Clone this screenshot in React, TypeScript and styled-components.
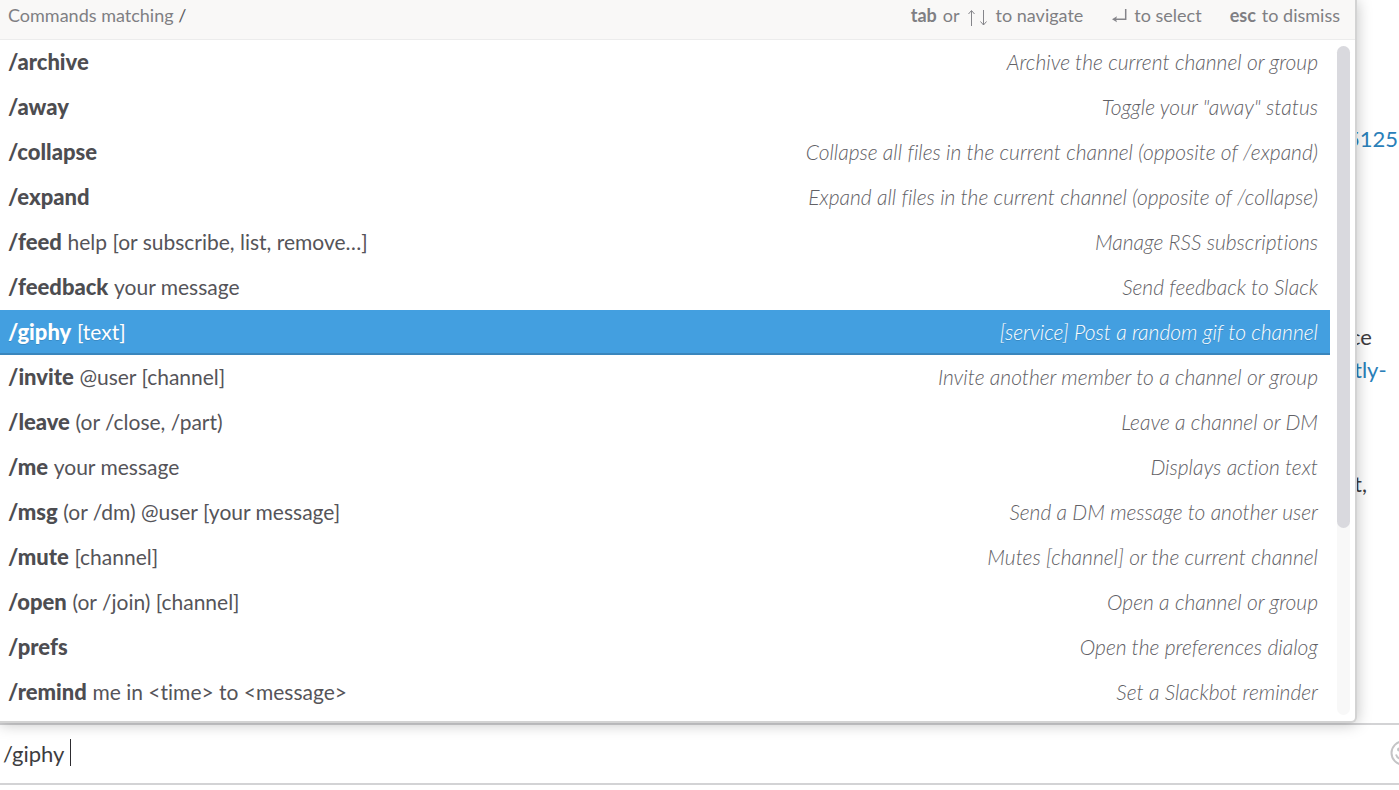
import React, { useState } from "react";
import styled, { createGlobalStyle } from "styled-components";

const GlobalStyle = createGlobalStyle`
  * { box-sizing: border-box; }
  body {
    margin: 0;
    background: #fff;
    color: #3d3c40;
    font-family: Lato, "Liberation Sans", sans-serif;
    font-size: 22px;
    font-variant-ligatures: none;
    overflow-x: hidden;
  }
`;

const Page = styled.div`
  display: flex;
  flex-direction: column;
  min-height: 100vh;
  overflow: hidden;
  padding-bottom: 5px;
`;

const Conversation = styled.main`
  position: relative;
  flex: 1;
  display: flex;
  justify-content: flex-end;
`;

const Messages = styled.div`
  display: flex;
  flex-direction: column;
  width: 54px;
  padding-top: 123px;
  line-height: 32px;
  white-space: nowrap;
`;

const Message = styled.p<{ $gap: number; $indent?: number }>`
  margin: 0 0 ${(p) => p.$gap}px;
  padding-left: ${(p) => p.$indent ?? 0}px;
`;

const MessageLink = styled.a`
  color: #2a80b9;
  text-decoration: none;
`;

const Popup = styled.section`
  position: absolute;
  left: 0;
  right: 42px;
  bottom: 0;
  background: #fff;
  border: solid #d3d3d3;
  border-width: 0 2px 2px 0;
  border-radius: 0 0 6px 0;
  box-shadow: 0 1px 15px rgba(0, 0, 0, 0.25);
`;

const PopupHeader = styled.header`
  display: flex;
  justify-content: space-between;
  height: 40px;
  padding: 3px 15px 0 8px;
  background: #f9f8f7;
  border-bottom: 1px solid #ececec;
  color: #7f7f83;
  font-size: 18px;
  line-height: 24px;
`;

const Title = styled.h2`
  margin: 0;
  font-size: 18px;
  font-weight: 400;

  b { color: #5c5c60; font-weight: 400; }
`;

const Hints = styled.div`
  display: flex;
  gap: 28px;
`;

const Hint = styled.span`
  display: flex;
  gap: 6px;
`;

const Key = styled.kbd`
  font-family: inherit;
  font-weight: 700;
`;

const KeyIcon = styled.svg`
  height: 24px;
  fill: none;
  stroke: #85858a;
`;

const PopupBody = styled.div`
  display: flex;
  padding-bottom: 6px;
`;

const CommandList = styled.ul`
  flex: 1;
  margin: 0;
  padding: 0;
  list-style: none;
`;

const Name = styled.strong`
  font-weight: 900;
  color: #4d4d51;
`;

const Usage = styled.span`
  font-size: 21px;
  color: #555459;
`;

const Description = styled.em`
  font-size: 21px;
  font-weight: 300;
  color: #626166;
`;

const Command = styled.li<{ $selected: boolean }>`
  display: flex;
  justify-content: space-between;
  height: 45px;
  padding: 0 12px 0 8px;
  line-height: 44px;
  white-space: nowrap;
  cursor: pointer;

  ${(p) =>
    p.$selected &&
    `
    background: #439fe0;
    border-bottom: 2px solid #3a86bd;
    text-shadow: 0 1px 0 rgba(0, 0, 0, 0.15);
    ${Name}, ${Usage}, ${Description} { color: #fff; }
  `}
`;

const ScrollTrack = styled.div`
  width: 13px;
  margin: 6px 5px 0 7px;
  border-radius: 7px;
  background: #f8f8f8;
`;

const ScrollThumb = styled.div`
  height: 72%;
  border-radius: 7px;
  background: #d9d9de;
`;

const Composer = styled.form`
  display: flex;
  align-items: center;
  height: 62px;
  padding-left: 3px;
  border: solid #d3d3d5;
  border-width: 2px 0;
`;

const MessageInput = styled.input`
  field-sizing: content;
  height: 32px;
  border: 0;
  padding: 0 0 2px;
  outline: none;
  background: none;
  color: #3d3c40;
  font: inherit;
`;

const Caret = styled.span`
  width: 1px;
  height: 27px;
  margin-bottom: 3px;
  background: #2d2c30;
`;

const EmojiButton = styled.button`
  margin: 0 -17px 0 auto;
  padding: 0 0 2px;
  border: 0;
  background: none;
  line-height: 0;
  cursor: pointer;
`;

const commands = [
  { name: "/archive", usage: "", description: "Archive the current channel or group" },
  { name: "/away", usage: "", description: 'Toggle your "away" status' },
  { name: "/collapse", usage: "", description: "Collapse all files in the current channel (opposite of /expand)" },
  { name: "/expand", usage: "", description: "Expand all files in the current channel (opposite of /collapse)" },
  { name: "/feed", usage: "help [or subscribe, list, remove…]", description: "Manage RSS subscriptions" },
  { name: "/feedback", usage: "your message", description: "Send feedback to Slack" },
  { name: "/giphy", usage: "[text]", description: "[service] Post a random gif to channel" },
  { name: "/invite", usage: "@user [channel]", description: "Invite another member to a channel or group" },
  { name: "/leave", usage: "(or /close, /part)", description: "Leave a channel or DM" },
  { name: "/me", usage: "your message", description: "Displays action text" },
  { name: "/msg", usage: "(or /dm) @user [your message]", description: "Send a DM message to another user" },
  { name: "/mute", usage: "[channel]", description: "Mutes [channel] or the current channel" },
  { name: "/open", usage: "(or /join) [channel]", description: "Open a channel or group" },
  { name: "/prefs", usage: "", description: "Open the preferences dialog" },
  { name: "/remind", usage: "me in <time> to <message>", description: "Set a Slackbot reminder" },
];

export default function App() {
  const [text, setText] = useState("/giphy ");
  const [selected, setSelected] = useState("/giphy");

  const choose = (name: string) => {
    setSelected(name);
    setText(name + " ");
  };

  return (
    <Page>
      <GlobalStyle />
      <Conversation>
        <Messages>
          <Message $gap={166} $indent={2}><MessageLink href="#">5125-</MessageLink></Message>
          <Message $gap={1} $indent={5}>ce</Message>
          <Message $gap={82} $indent={9}><MessageLink href="#">tly-</MessageLink></Message>
          <Message $gap={0} $indent={9}>t,</Message>
        </Messages>
        <Popup>
          <PopupHeader>
            <Title>Commands matching <b>/</b></Title>
            <Hints>
              <Hint>
                <Key>tab</Key> or
                <KeyIcon width="24" viewBox="0 0 24 24" aria-hidden="true">
                  <path d="M5.5 23V8M2.5 11L5.5 7.5L8.5 11M17.5 7V22M14.5 18.5L17.5 22L20.5 18.5" />
                </KeyIcon>
                to navigate
              </Hint>
              <Hint>
                <KeyIcon width="17" viewBox="0 0 17 24" aria-hidden="true">
                  <path strokeWidth="1.5" d="M14.7 6V16.2H3" />
                  <path fill="#85858a" stroke="none" d="M1 16.2L6 13.2L5 16.2L6 19.2Z" />
                </KeyIcon>
                to select
              </Hint>
              <Hint><Key>esc</Key> to dismiss</Hint>
            </Hints>
          </PopupHeader>
          <PopupBody>
            <CommandList role="listbox" aria-label="Commands">
              {commands.map((c) => (
                <Command
                  key={c.name}
                  role="option"
                  aria-selected={c.name === selected}
                  $selected={c.name === selected}
                  onClick={() => choose(c.name)}
                >
                  <span><Name>{c.name}</Name> <Usage>{c.usage}</Usage></span>
                  <Description>{c.description}</Description>
                </Command>
              ))}
            </CommandList>
            <ScrollTrack><ScrollThumb /></ScrollTrack>
          </PopupBody>
        </Popup>
      </Conversation>
      <Composer onSubmit={(e) => e.preventDefault()}>
        <MessageInput aria-label="Message" value={text} onChange={(e) => setText(e.target.value)} />
        <Caret />
        <EmojiButton type="button" aria-label="Insert emoji">
          <svg width="26" height="26" viewBox="0 0 26 26" fill="none" stroke="#c4c4c6" strokeWidth="2">
            <circle cx="13" cy="13" r="11.5" />
            <circle cx="9" cy="9.5" r="2" fill="#c4c4c6" stroke="none" />
            <circle cx="17" cy="9.5" r="2" fill="#c4c4c6" stroke="none" />
            <path d="M6 14.5C8 21 18 21 20 14.5" />
          </svg>
        </EmojiButton>
      </Composer>
    </Page>
  );
}
